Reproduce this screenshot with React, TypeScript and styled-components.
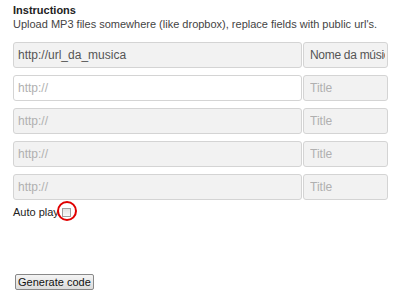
import React from "react";
import styled, { createGlobalStyle } from "styled-components";

const Global = createGlobalStyle`
  body {
    margin: 0;
    background: #fff;
    font-family: Arial, "Liberation Sans", sans-serif;
  }
`;

const Page = styled.div`
  padding: 4px 0 0 13px;
  width: 375px;
`;

const Heading = styled.div`
  font-size: 11px;
  font-weight: bold;
  color: #222;
  line-height: 13px;
`;

const Note = styled.div`
  font-size: 11px;
  color: #444;
  line-height: 13px;
  margin-top: 1px;
`;

const Fields = styled.div`
  display: flex;
  flex-direction: column;
  gap: 7px;
  margin-top: 11px;
`;

const Row = styled.div`
  display: flex;
  gap: 1px;
`;

const Field = styled.input<{ $white?: boolean; $wide?: boolean }>`
  box-sizing: border-box;
  height: 26px;
  width: ${(p) => (p.$wide ? "289px" : "85px")};
  border: 1px solid #d4d4d4;
  border-radius: 3px;
  background: ${(p) => (p.$white ? "#fff" : "#f2f2f2")};
  font-family: Arial, "Liberation Sans", sans-serif;
  font-size: 12px;
  letter-spacing: ${(p) => (p.$wide ? "0" : "-0.3px")};
  color: #555;
  padding: ${(p) => (p.$wide ? "0 4px" : "0 2px 0 6px")};
  outline: none;
  &::placeholder {
    color: #b0b0b0;
    letter-spacing: 0;
  }
`;

const AutoPlay = styled.label`
  display: flex;
  align-items: center;
  margin-top: 4px;
  font-size: 11px;
  color: #222;
  height: 16px;
`;

const CheckWrap = styled.span`
  position: relative;
  display: inline-flex;
  width: 10px;
  height: 10px;
  margin-left: 3px;
`;

const Box = styled.span`
  box-sizing: border-box;
  width: 9px;
  height: 9px;
  margin-top: 1px;
  border: 1px solid #a0a0a0;
  background: linear-gradient(#e2e2e2, #f8f8f8);
`;

const Ring = styled.span`
  position: absolute;
  left: -5px;
  top: -6px;
  width: 16px;
  height: 16px;
  border: 2px solid #e00000;
  border-radius: 50%;
`;

const Button = styled.button`
  margin: 54px 0 0 2px;
  height: 16px;
  padding: 0 2px;
  border: 1px solid #888;
  border-radius: 2px;
  background: linear-gradient(#f4f4f4, #dcdcdc);
  font-family: Arial, "Liberation Sans", sans-serif;
  font-size: 11px;
  line-height: 13px;
  color: #111;
`;

const rows = [
  { url: "http://url_da_musica", title: "Nome da música" },
  { url: "", title: "", white: true },
  { url: "", title: "" },
  { url: "", title: "" },
  { url: "", title: "" },
];

export default function App() {
  return (
    <>
      <Global />
      <Page>
        <Heading>Instructions</Heading>
        <Note>Upload MP3 files somewhere (like dropbox), replace fields with public url's.</Note>
        <Fields>
          {rows.map((r, i) => (
            <Row key={i}>
              <Field $wide $white={r.white} defaultValue={r.url} placeholder="http://" />
              <Field defaultValue={r.title} placeholder="Title" />
            </Row>
          ))}
        </Fields>
        <AutoPlay>
          Auto play
          <CheckWrap>
            <Box />
            <Ring />
          </CheckWrap>
        </AutoPlay>
        <Button>Generate code</Button>
      </Page>
    </>
  );
}
